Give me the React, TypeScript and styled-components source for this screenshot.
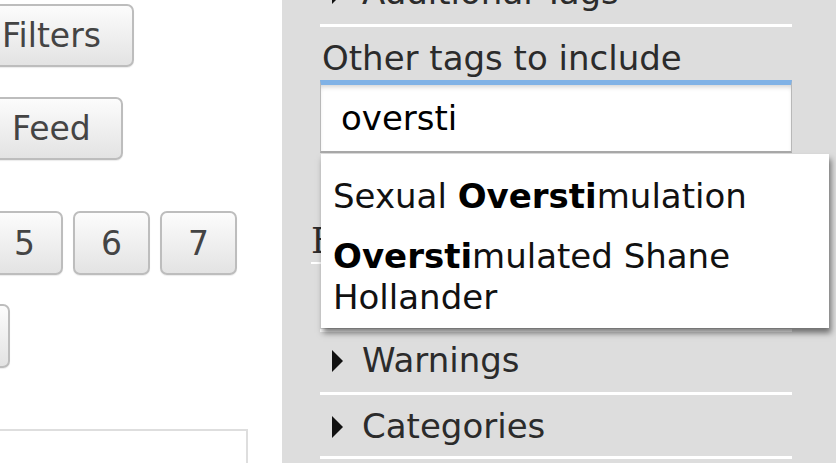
import styled, { createGlobalStyle } from "styled-components";

const GlobalStyle = createGlobalStyle`
  html, body {
    margin: 0;
    padding: 0;
    overflow: hidden;
    background: #fff;
  }
  body {
    font-family: "DejaVu Sans", Verdana, sans-serif;
  }
`;

const suggestions = [
  { match: "Oversti", before: "Sexual ", after: "mulation" },
  { match: "Oversti", before: "", after: "mulated Shane Hollander" },
];

const App = () => {
  return (
    <>
      <GlobalStyle />
      <Page>
        <Results>
          <ButtonRow $shift={-30} $gap={4}>
            <Button $wide>Filters</Button>
          </ButtonRow>
          <ButtonRow $shift={-20} $gap={30}>
            <Button>Feed</Button>
          </ButtonRow>
          <Pager $shift={-14} $gap={51}>
            {["5", "6", "7"].map((n) => (
              <Button key={n} $page>
                {n}
              </Button>
            ))}
          </Pager>
          <ButtonRow $shift={-67} $gap={29}>
            <Button $page>8</Button>
          </ButtonRow>
          <WorkBox>
            <WorkTitle>Sort and Filter lll</WorkTitle>
          </WorkBox>
        </Results>

        <Sidebar>
          <Toggle $lift>
            <Arrow />
            Additional Tags
          </Toggle>

          <Field>
            <Label>Other tags to include</Label>
            <Autocomplete>
              <TagInput defaultValue="oversti" />
              <Dropdown>
                {suggestions.map((s) => (
                  <Suggestion key={s.after}>
                    {s.before}
                    <strong>{s.match}</strong>
                    {s.after}
                  </Suggestion>
                ))}
              </Dropdown>
            </Autocomplete>
          </Field>

          <Heading>Exclude</Heading>
          <Toggle>
            <Arrow />
            Ratings
          </Toggle>
          <Toggle>
            <Arrow />
            Warnings
          </Toggle>
          <Toggle $roomy>
            <Arrow />
            Categories
          </Toggle>
        </Sidebar>
      </Page>
    </>
  );
};

const Page = styled.div`
  display: flex;
  width: 836px;
  height: 463px;
  overflow: hidden;
`;

const Results = styled.div`
  width: 282px;
  flex-shrink: 0;
  display: flex;
  flex-direction: column;
  background: #fff;
`;

const ButtonRow = styled.div<{ $shift: number; $gap: number }>`
  display: flex;
  margin-left: ${({ $shift }) => $shift}px;
  margin-top: ${({ $gap }) => $gap}px;
`;

const Pager = styled(ButtonRow)`
  gap: 10px;
`;

const Button = styled.div<{ $page?: boolean; $wide?: boolean }>`
  box-sizing: border-box;
  height: ${({ $page }) => ($page ? 64 : 63)}px;
  width: ${({ $page }) => ($page ? "77px" : "auto")};
  padding: ${({ $page, $wide }) =>
    $page ? "0" : $wide ? "0 31px 0 30px" : "0 30px"};
  display: flex;
  align-items: center;
  justify-content: center;
  flex-shrink: 0;
  border: 2px solid #bdbdbd;
  border-radius: 7px;
  background: linear-gradient(#fcfcfc, #e3e3e3);
  box-shadow: 0 1px 1px rgba(0, 0, 0, 0.08);
  color: #444;
  font-size: 33px;
  line-height: 1;
  white-space: nowrap;
`;

const WorkBox = styled.div`
  margin: 61px 0 0 -10px;
  width: 258px;
  height: 120px;
  box-sizing: border-box;
  border: 2px solid #dedede;
  padding: 27px 0 0 40px;
  flex-shrink: 0;
`;

const WorkTitle = styled.div`
  font-size: 33px;
  color: #cfcfcf;
  white-space: nowrap;
`;

const Sidebar = styled.div`
  flex: 1;
  background: #dddddd;
  padding: 0 44px 0 38px;
  display: flex;
  flex-direction: column;
  color: #2b2b2b;
`;

const Toggle = styled.div<{ $lift?: boolean; $roomy?: boolean }>`
  display: flex;
  align-items: center;
  flex-shrink: 0;
  margin-top: ${({ $lift }) => ($lift ? "-36px" : "0")};
  padding: ${({ $roomy }) => ($roomy ? "11px 0 9px 12px" : "8px 0 11px 12px")};
  border-bottom: 3px solid #fff;
  font-size: 34px;
  line-height: 41px;
`;

const Arrow = styled.span`
  width: 0;
  height: 0;
  margin-right: 19px;
  border-left: 11px solid #111;
  border-top: 11px solid transparent;
  border-bottom: 11px solid transparent;
`;

const Field = styled.div`
  display: flex;
  flex-direction: column;
  flex-shrink: 0;
`;

const Label = styled.label`
  margin-top: 11px;
  padding-left: 2px;
  font-size: 34px;
  line-height: 41px;
  white-space: nowrap;
`;

const Autocomplete = styled.div`
  position: relative;
  margin-top: 1px;
`;

const TagInput = styled.input`
  display: block;
  box-sizing: border-box;
  width: 100%;
  height: 73px;
  margin: 0;
  padding: 0 20px;
  border: 1px solid #b8b8b8;
  border-top: 5px solid #80b2e6;
  border-bottom: 2px solid #a9a9a9;
  background: #fff;
  box-shadow: inset 0 4px 5px -2px rgba(0, 0, 0, 0.18);
  font-family: "DejaVu Sans", Verdana, sans-serif;
  font-size: 34px;
  color: #000;
  outline: none;
`;

const Dropdown = styled.ul`
  position: absolute;
  z-index: 5;
  top: calc(100% + 1px);
  left: 1px;
  width: 508px;
  box-sizing: border-box;
  margin: 0;
  padding: 13px 0 0;
  list-style: none;
  background: #fff;
  box-shadow: 2px 5px 6px rgba(0, 0, 0, 0.5);
`;

const Suggestion = styled.li`
  padding: 9px 12px 10px;
  font-size: 34px;
  line-height: 41px;
  color: #111;

  strong {
    font-weight: bold;
    color: #000;
  }
`;

const Heading = styled.div`
  flex-shrink: 0;
  margin: 0 0 5px -9px;
  padding-top: 68px;
  border-bottom: 2px solid #fff;
  font-family: "DejaVu Serif", Georgia, serif;
  font-size: 35px;
  line-height: 41px;
  color: #2b2b2b;
`;

export default App;
